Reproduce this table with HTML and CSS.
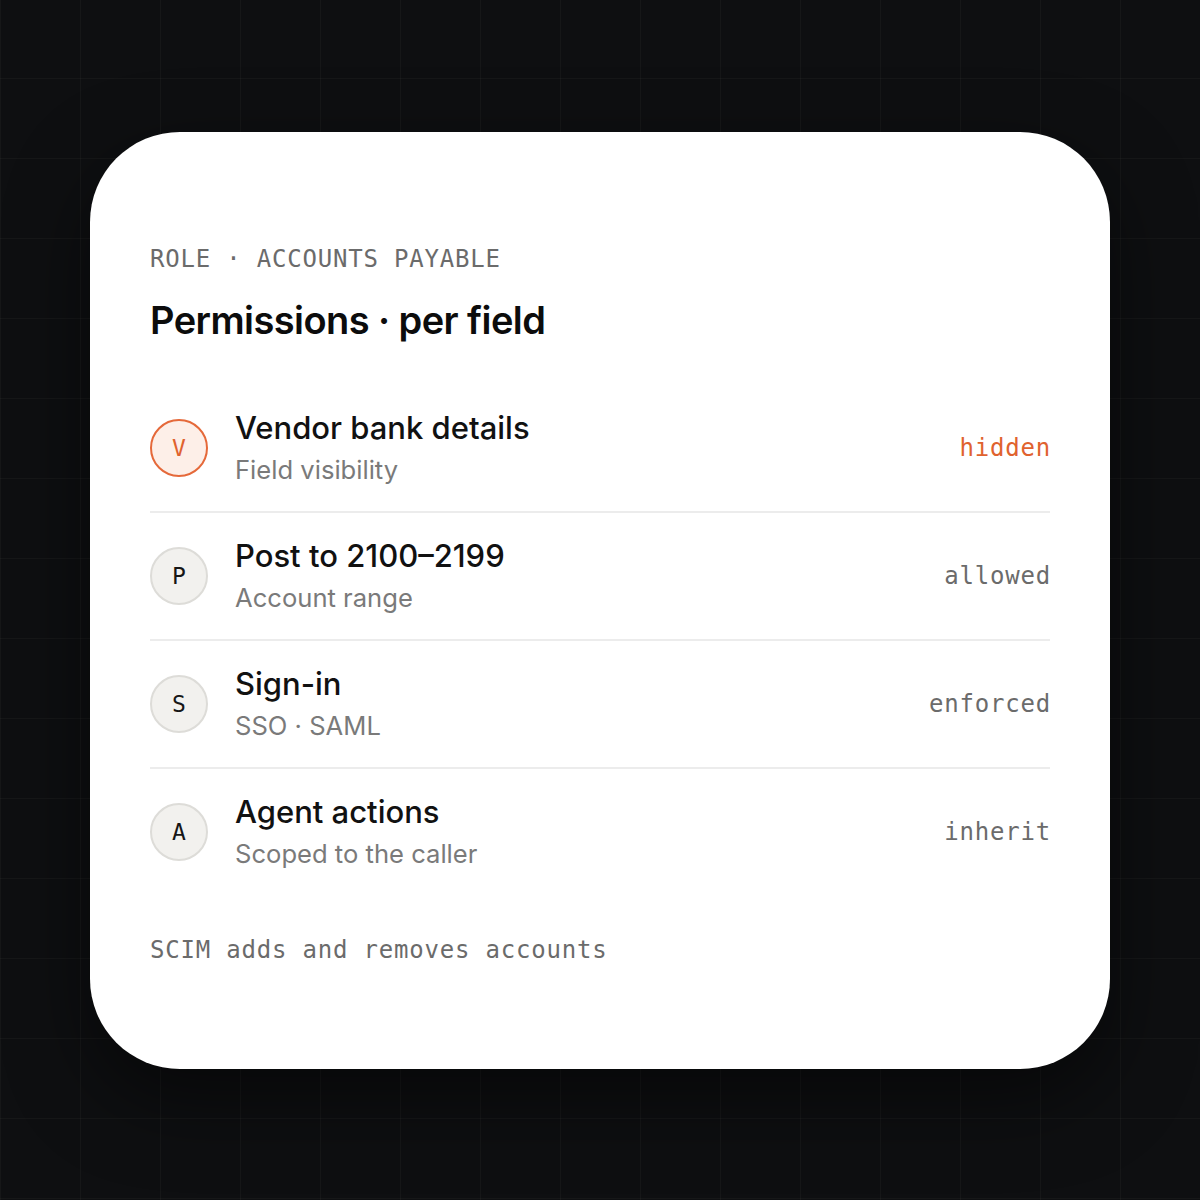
FILE: index.html
```html
<!DOCTYPE html>
<html lang="en">
<head>
<meta charset="utf-8">
<title>Permissions</title>
<link rel="stylesheet" href="styles.css">
</head>
<body>
<main class="card">
  <div class="eyebrow">ROLE · ACCOUNTS PAYABLE</div>
  <h1 class="title">Permissions · per field</h1>
  <ul class="rows">
    <li class="row">
      <span class="avatar avatar-accent">V</span>
      <div class="text">
        <div class="row-title">Vendor bank details</div>
        <div class="row-sub">Field visibility</div>
      </div>
      <span class="value value-accent">hidden</span>
    </li>
    <li class="row">
      <span class="avatar">P</span>
      <div class="text">
        <div class="row-title">Post to 2100–2199</div>
        <div class="row-sub">Account range</div>
      </div>
      <span class="value">allowed</span>
    </li>
    <li class="row">
      <span class="avatar">S</span>
      <div class="text">
        <div class="row-title">Sign-in</div>
        <div class="row-sub">SSO · SAML</div>
      </div>
      <span class="value">enforced</span>
    </li>
    <li class="row">
      <span class="avatar">A</span>
      <div class="text">
        <div class="row-title">Agent actions</div>
        <div class="row-sub">Scoped to the caller</div>
      </div>
      <span class="value">inherit</span>
    </li>
  </ul>
  <div class="footer">SCIM adds and removes accounts</div>
</main>
</body>
</html>
```

FILE: styles.css
```css
* { box-sizing: border-box; }

html, body {
  margin: 0;
  padding: 0;
}

body {
  min-height: 100vh;
  background-color: #0e0f11;
  background-image:
    linear-gradient(to right, rgba(255,255,255,0.03) 1px, transparent 1px),
    linear-gradient(to bottom, rgba(255,255,255,0.03) 1px, transparent 1px);
  background-size: 80px 80px;
  background-position: 0 -2px;
  display: flex;
  align-items: center;
  justify-content: center;
  font-family: Inter, "Noto Sans", sans-serif;
}

.card {
  width: 1020px;
  background: #ffffff;
  border-radius: 90px;
  padding: 113px 60px 105px;
  box-shadow: 0 30px 80px rgba(0,0,0,0.5);
}

.eyebrow,
.footer,
.value,
.avatar {
  font-family: "DejaVu Sans Mono", "Liberation Mono", monospace;
}

.eyebrow {
  font-size: 24px;
  line-height: 28px;
  letter-spacing: 0.8px;
  color: #6b6b6b;
}

.title {
  margin: 25px 0 0;
  font-size: 38px;
  line-height: 44px;
  font-weight: 600;
  letter-spacing: -0.015em;
  color: #0c0c0c;
}

.rows {
  list-style: none;
  margin: 43px 0 0;
  padding: 0;
}

.row {
  display: flex;
  align-items: center;
  padding: 25px 0;
  border-bottom: 2px solid #ececec;
}

.row:last-child {
  border-bottom: none;
}

.avatar {
  flex: none;
  width: 58px;
  height: 58px;
  border-radius: 50%;
  background: #f2f1ee;
  border: 2px solid #dddcd8;
  display: flex;
  align-items: center;
  justify-content: center;
  font-size: 23px;
  color: #161616;
}

.avatar-accent {
  background: #fdefe8;
  border-color: #e5693a;
  color: #e0622e;
}

.text {
  flex: 1;
  margin-left: 27px;
  display: flex;
  flex-direction: column;
  gap: 8px;
}

.row-title {
  font-size: 31px;
  line-height: 36px;
  font-weight: 500;
  color: #111111;
}

.row-sub {
  font-size: 25.6px;
  line-height: 32px;
  color: #7a7a7a;
}

.value {
  font-size: 24px;
  letter-spacing: 0.8px;
  margin-right: -1px;
  color: #6b6b6b;
}

.value-accent {
  color: #e0622e;
}

.footer {
  margin-top: 41px;
  font-size: 24px;
  line-height: 28px;
  letter-spacing: 0.8px;
  color: #6b6b6b;
}
```
